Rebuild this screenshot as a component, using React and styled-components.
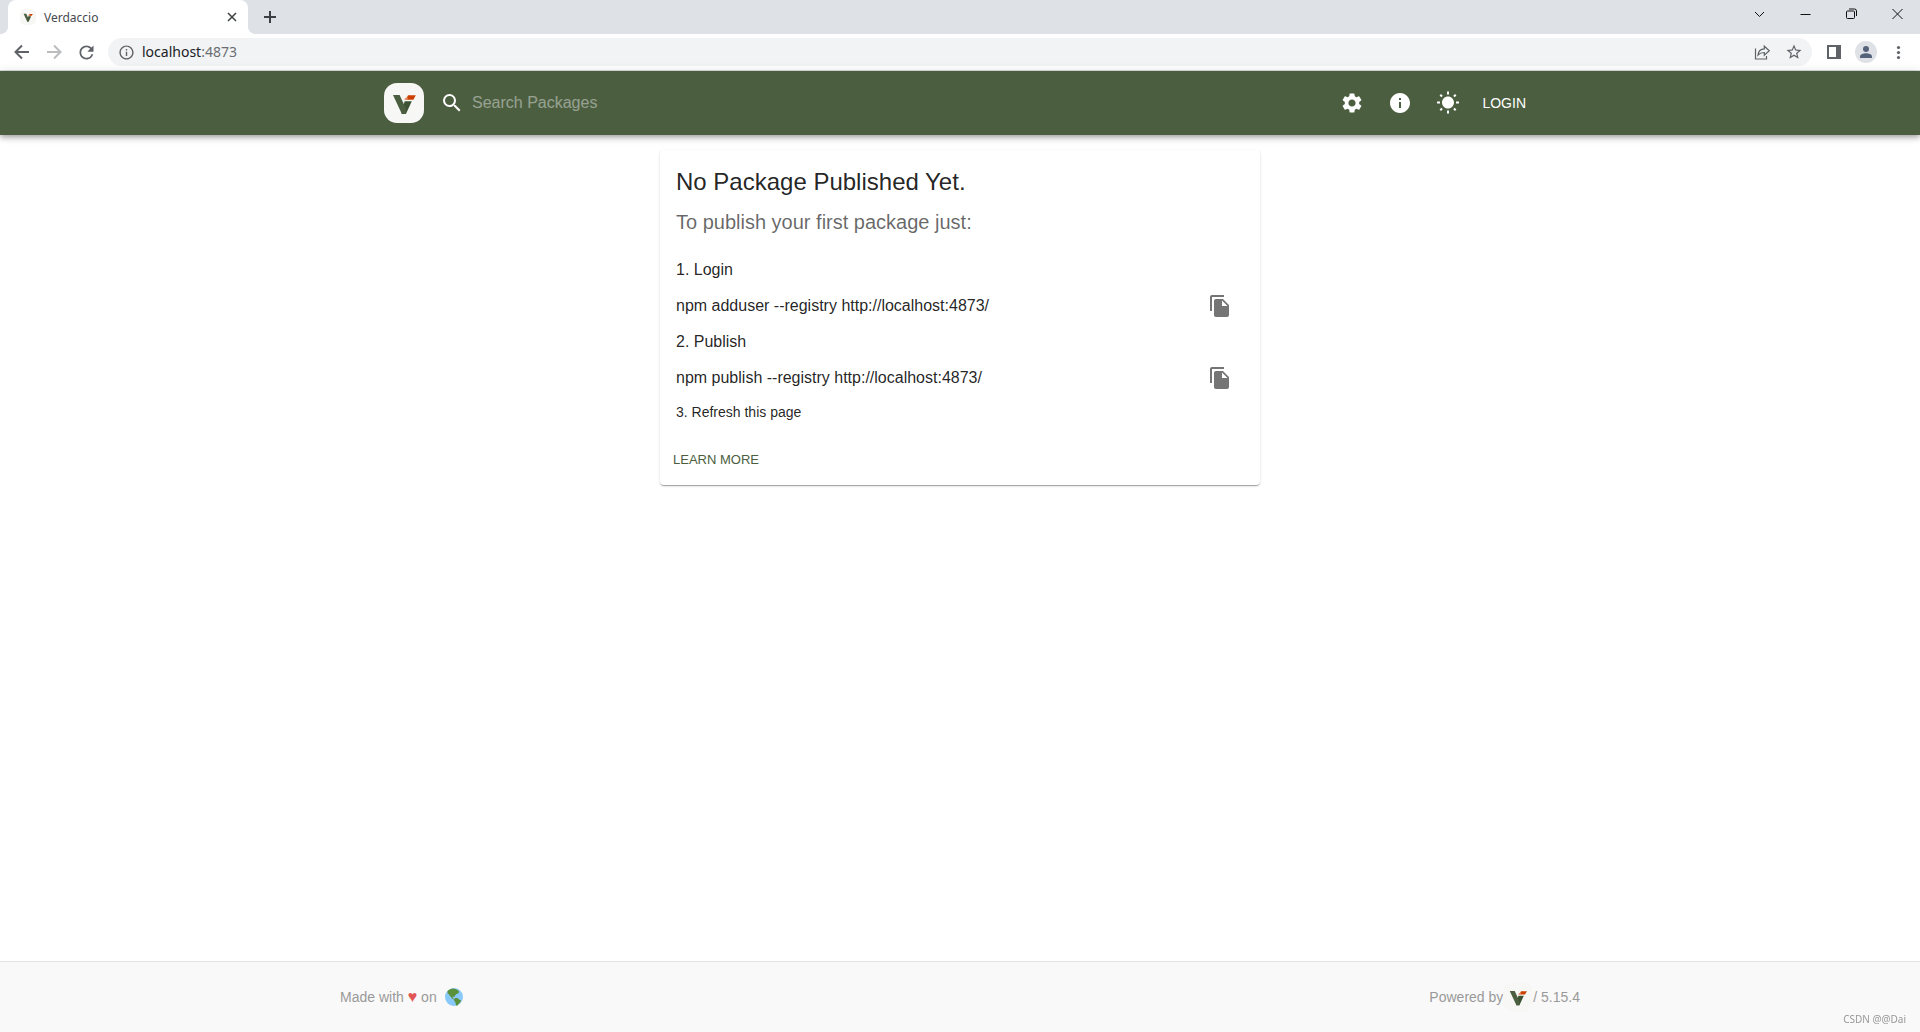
import React from 'react';
import styled, { createGlobalStyle } from 'styled-components';
import {
  MdFileCopy,
  MdInfo,
  MdInfoOutline,
  MdRefresh,
  MdSearch,
  MdSettings,
  MdStarOutline,
  MdWbSunny,
} from 'react-icons/md';

const GlobalStyle = createGlobalStyle`
  * {
    box-sizing: border-box;
  }
  body {
    margin: 0;
    background: #fff;
    color: rgba(0, 0, 0, 0.87);
    font-family: "Liberation Sans", Arial, sans-serif;
  }
  button, input {
    font-family: inherit;
  }
`;

const Page = styled.div`
  display: flex;
  flex-direction: column;
  min-height: 100vh;
`;

/* browser window */

const TabStrip = styled.div`
  display: flex;
  height: 34px;
  padding-left: 8px;
  background: #dee1e6;
  font-family: "Noto Sans", sans-serif;
`;

const Tab = styled.div`
  position: relative;
  display: flex;
  align-items: center;
  gap: 8px;
  width: 240px;
  height: 34px;
  padding: 0 8px 0 12px;
  border-radius: 8px 8px 0 0;
  background: #fff;
  font-size: 12px;
  color: #45494d;

  &::before,
  &::after {
    content: '';
    position: absolute;
    bottom: 0;
    width: 8px;
    height: 8px;
  }
  &::before {
    left: -8px;
    background: radial-gradient(circle at 0 0, #dee1e6 8px, #fff 8px);
  }
  &::after {
    right: -8px;
    background: radial-gradient(circle at 100% 0, #dee1e6 8px, #fff 8px);
  }
`;

const TabTitle = styled.span`
  flex: 1;
`;

const PlainButton = styled.button`
  display: flex;
  align-items: center;
  justify-content: center;
  flex: none;
  width: ${({ $width }) => $width || 20}px;
  height: ${({ $height }) => $height || 20}px;
  padding: 0;
  border: 0;
  background: none;
  color: ${({ $color }) => $color || '#5f6368'};
  cursor: pointer;

  svg {
    flex: none;
  }
`;

const NewTab = styled.div`
  display: flex;
  align-items: center;
  flex: 1;
  padding-left: 8px;
`;

const WindowControls = styled.div`
  display: flex;
  height: 28px;
`;

const Toolbar = styled.div`
  display: flex;
  align-items: center;
  gap: 12px;
  height: 37px;
  padding: 0 12px;
  border-bottom: 1px solid #dadce0;
  background: #fff;
`;

const AddressBar = styled.div`
  display: flex;
  align-items: center;
  flex: 1;
  gap: 12px;
  height: 28px;
  padding: 0 8px;
  border-radius: 14px;
  background: #f1f3f4;
  font-family: "Noto Sans", sans-serif;
`;

const Url = styled.div`
  flex: 1;
  margin-left: -6px;
  padding-bottom: 2px;
  font-size: 14px;
  color: #202124;

  span {
    color: #6b6f73;
  }
`;

/* application */

const Header = styled.header`
  position: relative;
  background: #4b5e40;
  box-shadow: 0 2px 4px -1px rgba(0, 0, 0, 0.2), 0 4px 5px rgba(0, 0, 0, 0.14),
    0 1px 10px rgba(0, 0, 0, 0.12);
`;

const HeaderInner = styled.div`
  display: flex;
  align-items: center;
  justify-content: space-between;
  max-width: 1200px;
  height: 64px;
  margin: 0 auto;
  padding: 0 24px;
`;

const HeaderLeft = styled.div`
  display: flex;
  align-items: center;
  gap: 16px;
`;

const LogoLink = styled.a`
  display: flex;
`;

const SearchLabel = styled.label`
  display: flex;
  align-items: center;
  gap: 8px;
  color: #fff;
`;

const SearchInput = styled.input`
  width: 280px;
  height: 32px;
  padding: 0;
  border: 0;
  outline: 0;
  background: none;
  color: #fff;
  font-size: 16px;

  &::placeholder {
    color: #fff;
    opacity: 0.42;
  }
`;

const HeaderRight = styled.div`
  display: flex;
  align-items: center;
`;

const LoginButton = styled.button`
  padding: 6px 10px;
  border: 0;
  background: none;
  color: #fff;
  font-size: 14px;
  line-height: 24px;
  cursor: pointer;
`;

const Main = styled.main`
  flex: 1;
  padding: 15px;
`;

const Card = styled.section`
  max-width: 600px;
  margin: 0 auto;
  padding: 16px 16px 7px;
  border-radius: 4px;
  background: #fff;
  box-shadow: 0 2px 1px -1px rgba(0, 0, 0, 0.2), 0 1px 1px rgba(0, 0, 0, 0.14),
    0 1px 3px rgba(0, 0, 0, 0.12);
`;

const Title = styled.h1`
  margin: 0 0 8px;
  font-size: 24px;
  font-weight: 400;
  line-height: 32px;
`;

const Subtitle = styled.p`
  margin: 0 0 16px;
  font-size: 20px;
  line-height: 32px;
  color: rgba(0, 0, 0, 0.6);
`;

const Step = styled.div`
  font-size: ${({ $small }) => ($small ? 14 : 16)}px;
  line-height: ${({ $small }) => ($small ? 28 : 32)}px;
`;

const Command = styled.div`
  display: flex;
  align-items: center;
  justify-content: space-between;
  padding-right: 4px;
  font-size: 16px;
`;

const CardActions = styled.div`
  display: flex;
  margin: 16px 0 0 -3px;
`;

const LearnMore = styled.a`
  color: #4b5e40;
  font-size: 13px;
  line-height: 36px;
  text-decoration: none;
`;

const Footer = styled.footer`
  border-top: 1px solid #e3e3e3;
  background: #f9f9f9;
  color: #999;
  font-size: 14px;
`;

const FooterInner = styled.div`
  display: flex;
  align-items: center;
  justify-content: space-between;
  max-width: 1240px;
  height: 70px;
  margin: 0 auto;
`;

const FooterGroup = styled.div`
  display: flex;
  align-items: center;
  gap: ${({ $gap }) => $gap}px;
`;

const Heart = styled.span`
  color: #e25555;
  font-size: 16px;
  line-height: 16px;
`;

const Watermark = styled.div`
  position: fixed;
  right: 14px;
  bottom: 7px;
  color: #999;
  font-family: "Noto Sans", sans-serif;
  font-size: 10px;
  line-height: 12px;
`;

const Logo = ({ size, background = '#f7f8f6' }) => (
  <svg width={size} height={size} viewBox="0 0 40 40" aria-hidden="true">
    <rect width="40" height="40" rx="13" fill={background} />
    <path d="M20.6 18.2h7.2l-5.9 12.9h-4.4z" fill="#3d5233" />
    <path d="M9 12h6.6l6.3 13.4v5.7h-4z" fill="#4b5e40" />
    <path d="M24 12.200h7.800l-2.400 4.600h-7.600z" fill="#cd4000" />
    <path d="M21.4 14.8h2.8l-.9 1.9h-3.1z" fill="#e98b62" />
  </svg>
);

const Earth = () => (
  <svg width="18" height="18" viewBox="0 0 36 36" aria-hidden="true">
    <circle cx="18" cy="18" r="18" fill="#88c9f9" />
    <path
      d="M5 6l4-3 6-2 6 1 6 3 1 3-2 3-3 1-3 3-1 3-3-1-1 2 3 3 3 1-1 1-5-2-4-5-3-4-3-3z"
      fill="#5c913b"
    />
    <path d="M20 20l5 0 3 3 4 2-1 3-3 3-3 4-3 0-1-6-3-4z" fill="#5c913b" />
  </svg>
);

const Arrow = ({ flip }) => (
  <svg width="20" height="20" viewBox="0 0 20 20" fill="none" stroke="currentColor" strokeWidth="2">
    <path d={flip ? 'M3 10h13M10 3.5l6.5 6.5-6.5 6.5' : 'M17 10H4M10 3.5L3.5 10l6.5 6.5'} />
  </svg>
);

const NewTabIcon = () => (
  <svg width="14" height="14" viewBox="0 0 14 14" fill="none" stroke="currentColor" strokeWidth="2">
    <path d="M7 1v12M1 7h12" />
  </svg>
);

const CloseTabIcon = () => (
  <svg width="16" height="16" viewBox="0 0 16 16" fill="none" stroke="currentColor" strokeWidth="1.5">
    <path d="M4 4l8 8M12 4l-8 8" />
  </svg>
);

const ShareIcon = () => (
  <svg width="20" height="20" viewBox="0 0 20 20" fill="none" stroke="currentColor" strokeWidth="1.2">
    <path d="M3.500 6.500v10.500h11v-3" />
    <path d="M6 13c.4-3.600 2.600-5.900 6.300-6.100V4.200l5 4.500-5 4.500v-2.700c-2.700 0-4.700.7-6.300 2.500z" />
  </svg>
);

const SidePanelIcon = () => (
  <svg width="20" height="20" viewBox="0 0 20 20">
    <path d="M3 3h14v14H3zM5 5v10h7V5z" fill="currentColor" fillRule="evenodd" />
  </svg>
);

const AvatarIcon = () => (
  <svg width="22" height="22" viewBox="0 0 22 22">
    <circle cx="11" cy="11" r="11" fill="#dee1e6" />
    <circle cx="11" cy="8" r="3" fill="#55637a" />
    <path d="M5 17v-1.500c0-2 3.500-3.200 6-3.200s6 1.200 6 3.200V17z" fill="#55637a" />
  </svg>
);

const MenuIcon = () => (
  <svg width="20" height="20" viewBox="0 0 20 20" fill="currentColor">
    <circle cx="10.500" cy="5.500" r="1.600" />
    <circle cx="10.500" cy="10.500" r="1.600" />
    <circle cx="10.500" cy="15.500" r="1.600" />
  </svg>
);

const windowIcons = {
  'Search tabs': 'M1 4l4.500 4.500L10 4',
  Minimize: 'M.5 6.500h10',
  Restore: 'M3 3h4.500a1 1 0 0 1 1 1v5.500a1 1 0 0 1-1 1h-6a1 1 0 0 1-1-1V4a1 1 0 0 1 1-1zM3 1h5.500a2 2 0 0 1 2 2v5',
  Close: 'M.5 1l10 10M10.500 1l-10 10',
};

const commands = [
  { step: '1. Login', command: 'npm adduser --registry http://localhost:4873/' },
  { step: '2. Publish', command: 'npm publish --registry http://localhost:4873/' },
];

const BrowserBar = () => (
  <>
    <TabStrip>
      <Tab>
        <Logo size={16} />
        <TabTitle>Verdaccio</TabTitle>
        <PlainButton $width={16} $height={16} $color="#3c4043" aria-label="Close tab">
          <CloseTabIcon />
        </PlainButton>
      </Tab>
      <NewTab>
        <PlainButton $width={28} $height={28} $color="#3c4043" aria-label="New tab">
          <NewTabIcon />
        </PlainButton>
      </NewTab>
      <WindowControls>
        {Object.entries(windowIcons).map(([name, path]) => (
          <PlainButton key={name} $width={46} $height={28} $color="#111" aria-label={name}>
            <svg width="11" height="12" viewBox="0 0 11 12" fill="none" stroke="currentColor">
              <path d={path} />
            </svg>
          </PlainButton>
        ))}
      </WindowControls>
    </TabStrip>
    <Toolbar>
      <PlainButton aria-label="Back"><Arrow /></PlainButton>
      <PlainButton aria-label="Forward" $color="#babcbe"><Arrow flip /></PlainButton>
      <PlainButton aria-label="Reload"><MdRefresh size={21} /></PlainButton>
      <AddressBar>
        <PlainButton aria-label="Site information"><MdInfoOutline size={17} /></PlainButton>
        <Url>localhost<span>:4873</span></Url>
        <PlainButton aria-label="Share"><ShareIcon /></PlainButton>
        <PlainButton aria-label="Bookmark"><MdStarOutline size={18} /></PlainButton>
      </AddressBar>
      <PlainButton aria-label="Side panel"><SidePanelIcon /></PlainButton>
      <PlainButton aria-label="Profile"><AvatarIcon /></PlainButton>
      <PlainButton aria-label="Menu"><MenuIcon /></PlainButton>
    </Toolbar>
  </>
);

const App = () => {
  return (
    <Page>
      <GlobalStyle />
      <BrowserBar />
      <Header>
        <HeaderInner>
          <HeaderLeft>
            <LogoLink href="#" aria-label="Verdaccio">
              <Logo size={40} />
            </LogoLink>
            <SearchLabel>
              <MdSearch size={24} />
              <SearchInput type="text" placeholder="Search Packages" aria-label="Search Packages" />
            </SearchLabel>
          </HeaderLeft>
          <HeaderRight>
            <PlainButton $width={48} $height={48} $color="#fff" aria-label="Settings">
              <MdSettings size={24} />
            </PlainButton>
            <PlainButton $width={48} $height={48} $color="#fff" aria-label="Information">
              <MdInfo size={24} />
            </PlainButton>
            <PlainButton $width={48} $height={48} $color="#fff" aria-label="Switch theme">
              <MdWbSunny size={24} />
            </PlainButton>
            <LoginButton>LOGIN</LoginButton>
          </HeaderRight>
        </HeaderInner>
      </Header>
      <Main>
        <Card>
          <Title>No Package Published Yet.</Title>
          <Subtitle>To publish your first package just:</Subtitle>
          {commands.map(({ step, command }) => (
            <React.Fragment key={step}>
              <Step>{step}</Step>
              <Command>
                <span>{command}</span>
                <PlainButton $width={40} $height={40} $color="#757575" aria-label="Copy to clipboard">
                  <MdFileCopy size={24} />
                </PlainButton>
              </Command>
            </React.Fragment>
          ))}
          <Step $small>3. Refresh this page</Step>
          <CardActions>
            <LearnMore href="#">LEARN MORE</LearnMore>
          </CardActions>
        </Card>
      </Main>
      <Footer>
        <FooterInner>
          <FooterGroup $gap={8}>
            <span>Made with <Heart>♥</Heart> on</span>
            <Earth />
          </FooterGroup>
          <FooterGroup $gap={0}>
            <span>Powered by</span>
            <Logo size={30} />
            <span>/ 5.15.4</span>
          </FooterGroup>
        </FooterInner>
      </Footer>
      <Watermark>CSDN @@Dai</Watermark>
    </Page>
  );
};

export default App;
